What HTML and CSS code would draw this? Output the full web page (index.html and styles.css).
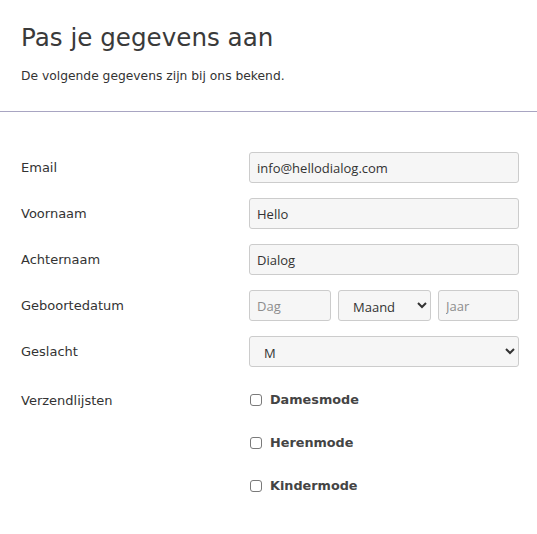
FILE: index.html
```html
<!DOCTYPE html>
<html lang="nl">
<head>
<meta charset="utf-8">
<title>Pas je gegevens aan</title>
<link rel="stylesheet" href="styles.css">
</head>
<body>
<header class="intro">
  <h1 class="title">Pas je gegevens aan</h1>
  <p class="lead">De volgende gegevens zijn bij ons bekend.</p>
</header>
<hr class="divider">
<form class="form">
  <div class="row">
    <label class="label">Email</label>
    <input class="field" type="text" value="info@hellodialog.com">
  </div>
  <div class="row">
    <label class="label">Voornaam</label>
    <input class="field" type="text" value="Hello">
  </div>
  <div class="row">
    <label class="label">Achternaam</label>
    <input class="field" type="text" value="Dialog">
  </div>
  <div class="row">
    <label class="label">Geboortedatum</label>
    <div class="date">
      <input class="field field-day" type="text" placeholder="Dag">
      <select class="field field-select field-month"><option>Maand</option></select>
      <input class="field field-year" type="text" placeholder="Jaar">
    </div>
  </div>
  <div class="row">
    <label class="label">Geslacht</label>
    <select class="field field-select"><option>M</option><option>V</option></select>
  </div>
  <div class="row row-lists">
    <label class="label">Verzendlijsten</label>
    <div class="checks">
      <label class="check"><input class="box" type="checkbox"><span>Damesmode</span></label>
      <label class="check"><input class="box" type="checkbox"><span>Herenmode</span></label>
      <label class="check"><input class="box" type="checkbox"><span>Kindermode</span></label>
    </div>
  </div>
</form>
</body>
</html>
```
FILE: styles.css
```css
html, body {
  margin: 0;
  padding: 0;
  background: #fff;
}
body {
  font-family: "DejaVu Sans", Verdana, sans-serif;
  color: #333;
}
.intro {
  padding: 22px 21px 0;
}
.title {
  margin: 0;
  font-family: "DejaVu Sans", sans-serif;
  font-weight: normal;
  font-size: 24.6px;
  line-height: 32px;
  color: #3a3a3a;
}
.lead {
  margin: 13px 0 0;
  font-size: 12.3px;
  line-height: 18px;
  color: #333;
}
.divider {
  margin: 26px 0 0;
  border: 0;
  border-top: 1px solid #a8a5c2;
  height: 0;
}
.form {
  padding: 40px 18px 0 21px;
  display: flex;
  flex-direction: column;
  gap: 15px;
}
.row {
  display: grid;
  grid-template-columns: 228px 270px;
  align-items: center;
}
.row-lists {
  align-items: start;
}
.label {
  font-size: 13px;
  line-height: 18px;
  padding-top: 1px;
  color: #333;
}
.row-lists .label {
  padding-top: 10px;
}
.field {
  box-sizing: border-box;
  height: 31px;
  width: 100%;
  margin: 0;
  padding: 0 7px;
  border: 1px solid #ccc;
  border-radius: 3px;
  background: #f6f6f6;
  font-family: "Open Sans", sans-serif;
  font-size: 13px;
  color: #333;
}
.field::placeholder {
  color: #8d8d8d;
}
.field-select {
  padding: 3px 6px 0 10px;
}
.date {
  display: grid;
  grid-template-columns: 82px 93px 81px;
  gap: 7px;
}
.checks {
  display: flex;
  flex-direction: column;
  gap: 27px;
  padding-top: 10px;
}
.check {
  display: flex;
  align-items: center;
  gap: 8px;
  font-weight: bold;
  font-size: 12.8px;
  line-height: 16px;
  color: #444;
}
.box {
  appearance: none;
  -webkit-appearance: none;
  box-sizing: border-box;
  margin: 0 0 0 1px;
  width: 12px;
  height: 12px;
  border: 1px solid #7a7a7a;
  border-radius: 3px;
  background: #fff;
}
```
